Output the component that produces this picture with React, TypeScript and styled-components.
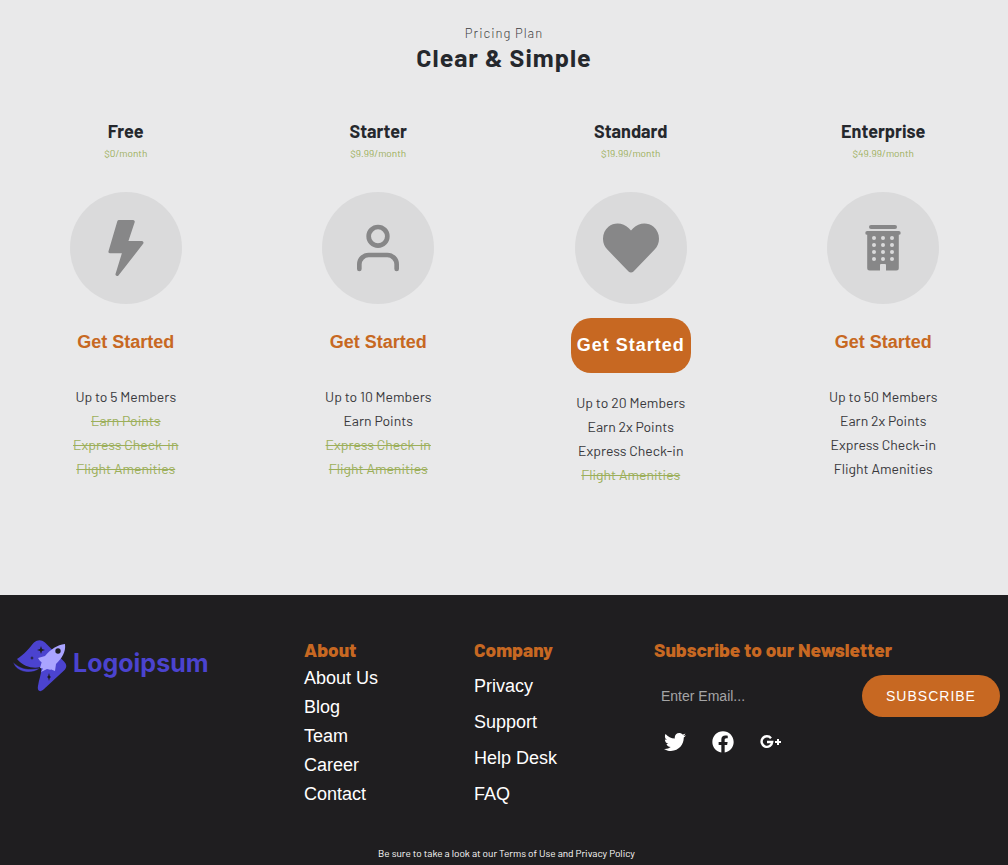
import React from "react";
import styled, { createGlobalStyle } from "styled-components";
import { FiUser } from "react-icons/fi";
import { BsLightningFill } from "react-icons/bs";
import { FaHeart, FaTwitter, FaFacebook } from "react-icons/fa";

const display = `"Barlow", Roboto, sans-serif`;
const body = `"Liberation Sans", Arial, sans-serif`;
const orange = "#c76822";

const GlobalStyle = createGlobalStyle`
  *, *::before, *::after { box-sizing: border-box; }
  body { margin: 0; background: #1f1e20; font-family: ${display}; color: #25282d; }
  h1, h2, h3, p, ul { margin: 0; padding: 0; }
  ul { list-style: none; }
  a { color: inherit; text-decoration: none; }
  button { border: 0; cursor: pointer; }
`;

const Pricing = styled.section`
  background: #e9e9ea;
  padding: 24px 0 108px;
  text-align: center;
`;

const Eyebrow = styled.p`
  font-size: 13px;
  line-height: 18px;
  letter-spacing: 1px;
  font-weight: 300;
  color: #3c3c40;
`;

const Title = styled.h1`
  font-size: 25px;
  line-height: 30px;
  letter-spacing: 1px;
  font-weight: 700;
`;

const Plans = styled.div`
  display: grid;
  grid-template-columns: repeat(4, minmax(0, 1fr));
  gap: 3px;
  margin-top: 45px;
  padding-left: 1px;
`;

const Plan = styled.article`
  display: flex;
  flex-direction: column;
  align-items: center;
`;

const PlanName = styled.h2`
  font-size: 18px;
  line-height: 28px;
  font-weight: 700;
`;

const Price = styled.p`
  font-size: 10px;
  line-height: 16px;
  color: #9caf5a;
`;

const IconDisc = styled.div`
  display: flex;
  align-items: center;
  justify-content: center;
  width: 112px;
  height: 112px;
  margin-top: 31px;
  border-radius: 50%;
  background: #dadadb;
  color: #878788;
`;

const PlanButton = styled.button<{ $filled?: boolean }>`
  margin-top: 14px;
  height: ${(p) => (p.$filled ? 55 : 49)}px;
  padding: 0 6px;
  border-radius: 20px;
  background: ${(p) => (p.$filled ? orange : "transparent")};
  color: ${(p) => (p.$filled ? "#fff" : orange)};
  font: 700 18px ${body};
  letter-spacing: ${(p) => (p.$filled ? 1 : 0)}px;
`;

const Features = styled.ul`
  margin-top: 18px;
  font-size: 14px;
  line-height: 24px;
`;

const Feature = styled.li<{ $off: boolean }>`
  color: ${(p) => (p.$off ? "#9caf5a" : "#38383c")};
  text-decoration: ${(p) => (p.$off ? "line-through" : "none")};
`;

const Footer = styled.footer`
  background: #1f1e20;
  color: #fff;
  padding: 41px 8px 4px 13px;
`;

const FooterGrid = styled.div`
  display: grid;
  grid-template-columns: minmax(0, 291fr) minmax(0, 170fr) minmax(0, 180fr) minmax(0, 346fr);
`;

const Brand = styled.a`
  display: flex;
  align-items: flex-start;
  gap: 6px;
  padding-top: 4px;
  font: 700 25px/46px Inter, sans-serif;
  color: #4b43cf;
`;

const Heading = styled.h3`
  font-size: 19px;
  line-height: 28px;
  font-weight: 800;
  color: ${orange};
`;

const Links = styled.ul<{ $row: number; $top: number }>`
  font: 18px ${body};
  margin-top: ${(p) => p.$top}px;
  line-height: ${(p) => p.$row}px;
`;

const Form = styled.form`
  display: flex;
  justify-content: space-between;
  align-items: center;
  margin-top: 11px;
`;

const Email = styled.input`
  flex: 1;
  min-width: 0;
  height: 42px;
  padding: 0 7px;
  border: 0;
  background: transparent;
  color: #fff;
  font: 14px ${body};
  &::placeholder { color: #a5a5a6; opacity: 1; }
`;

const Subscribe = styled.button`
  width: 138px;
  height: 42px;
  border-radius: 21px;
  background: ${orange};
  color: #fff;
  font: 14px ${body};
  letter-spacing: 1px;
`;

const Social = styled.div`
  display: flex;
  align-items: center;
  gap: 26px;
  padding: 14px 10px;
  a { display: flex; }
`;

const Legal = styled.p`
  margin-top: 34px;
  text-align: center;
  font-size: 10px;
  line-height: 14px;
`;

const BuildingIcon = () => (
  <svg width="36" height="46" viewBox="0 0 36 46" fill="currentColor" aria-hidden="true">
    <rect x="4" y="0" width="28" height="4" rx="2" />
    <path
      fillRule="evenodd"
      d="M2.200 6h31.600a1.900 1.900 0 0 1 0 3.800v33.200a2.500 2.500 0 0 1-2.500 2.500H21v-5.500a1 1 0 0 0-1-1h-4a1 1 0 0 0-1 1v5.500H4.700a2.500 2.500 0 0 1-2.500-2.500V9.800a1.900 1.900 0 0 1 0-3.800z"
    />
    {[13, 20, 27, 34].map((y) =>
      [9, 18, 27].map((x) => <circle key={`${x}-${y}`} cx={x} cy={y} r="2" fill="#dadadb" />)
    )}
  </svg>
);

const GooglePlusIcon = () => (
  <svg width="22" height="14" viewBox="0 0 22 14" aria-hidden="true">
    <path d="M11 3.200A5.300 5.300 0 1 0 12.200 7H7" fill="none" stroke="#fff" strokeWidth="2.400" />
    <path d="M18 4v6M15 7h6" fill="none" stroke="#fff" strokeWidth="2" />
  </svg>
);

const RocketLogo = () => (
  <svg width="54" height="52" viewBox="0 0 54 52" aria-hidden="true">
    <path d="M4 19C11 15 17 7 21 2.500c4-3 7-3 11 0l19 19c3 3 3 6 0 9L31 49c-4 4-7 2-6-3 1-7 4-13 3-19-8 2-17 0-24-8z" fill="#4b43cf" />
    <path d="M0 22c8 8 17 8 27 6-7 7-24 5-27-6z" fill="#4b43cf" stroke="#1f1e20" strokeWidth="0.500" />
    <path d="M52 4c1 8-3 14-9 20l-1 7-5-2-3-2-3-3-4-3-2-3 7-2C38 9 44 5 52 4z" fill="#aaa4ff" />
    <path d="m29 21-2 7 3 .5L28 32l6-3 4 1-2-5z" fill="#aaa4ff" />
    <circle cx="45" cy="11" r="2.700" fill="#1f1e20" />
    <path
      d="m28 6 1 3 3 1-3 1-1 3-1-3-3-1 3-1zM19 16l.6 1.400 1.400.6-1.400.6L19 20l-.6-1.400L17 18l1.400-.6zM36 33l.8 3 1.200 1-1.200 1-.8 3-.8-3-1.200-1 1.200-1z"
      fill="#1f1e20"
    />
  </svg>
);

const plans = [
  { name: "Free", price: "$0/month", icon: <BsLightningFill size={56} />, features: ["Up to 5 Members", "Earn Points", "Express Check-in", "Flight Amenities"], included: 1 },
  { name: "Starter", price: "$9.99/month", icon: <FiUser size={56} />, features: ["Up to 10 Members", "Earn Points", "Express Check-in", "Flight Amenities"], included: 2 },
  { name: "Standard", price: "$19.99/month", icon: <FaHeart size={56} />, features: ["Up to 20 Members", "Earn 2x Points", "Express Check-in", "Flight Amenities"], included: 3, featured: true },
  { name: "Enterprise", price: "$49.99/month", icon: <BuildingIcon />, features: ["Up to 50 Members", "Earn 2x Points", "Express Check-in", "Flight Amenities"], included: 4 },
];

const LinkColumn = ({ title, items, row, top = 0 }: { title: string; items: string[]; row: number; top?: number }) => (
  <nav aria-label={title}>
    <Heading>{title}</Heading>
    <Links $row={row} $top={top}>
      {items.map((item) => (
        <li key={item}><a href="#">{item}</a></li>
      ))}
    </Links>
  </nav>
);

export default function App() {
  return (
    <>
      <GlobalStyle />
      <Pricing>
        <Eyebrow>Pricing Plan</Eyebrow>
        <Title>Clear &amp; Simple</Title>
        <Plans>
          {plans.map((plan) => (
            <Plan key={plan.name}>
              <PlanName>{plan.name}</PlanName>
              <Price>{plan.price}</Price>
              <IconDisc>{plan.icon}</IconDisc>
              <PlanButton type="button" $filled={plan.featured}>Get Started</PlanButton>
              <Features>
                {plan.features.map((f, i) => (
                  <Feature key={f} $off={i >= plan.included}>{f}</Feature>
                ))}
              </Features>
            </Plan>
          ))}
        </Plans>
      </Pricing>
      <Footer>
        <FooterGrid>
          <Brand href="#"><RocketLogo />Logoipsum</Brand>
          <LinkColumn title="About" row={29} items={["About Us", "Blog", "Team", "Career", "Contact"]} />
          <LinkColumn title="Company" row={36} top={4} items={["Privacy", "Support", "Help Desk", "FAQ"]} />
          <div>
            <Heading>Subscribe to our Newsletter</Heading>
            <Form onSubmit={(e) => e.preventDefault()}>
              <Email type="email" placeholder="Enter Email..." aria-label="Email" />
              <Subscribe type="submit">SUBSCRIBE</Subscribe>
            </Form>
            <Social>
              <a href="#" aria-label="Twitter"><FaTwitter size={22} /></a>
              <a href="#" aria-label="Facebook"><FaFacebook size={22} /></a>
              <a href="#" aria-label="Google Plus"><GooglePlusIcon /></a>
            </Social>
          </div>
        </FooterGrid>
        <Legal>Be sure to take a look at our Terms of Use and Privacy Policy</Legal>
      </Footer>
    </>
  );
}
